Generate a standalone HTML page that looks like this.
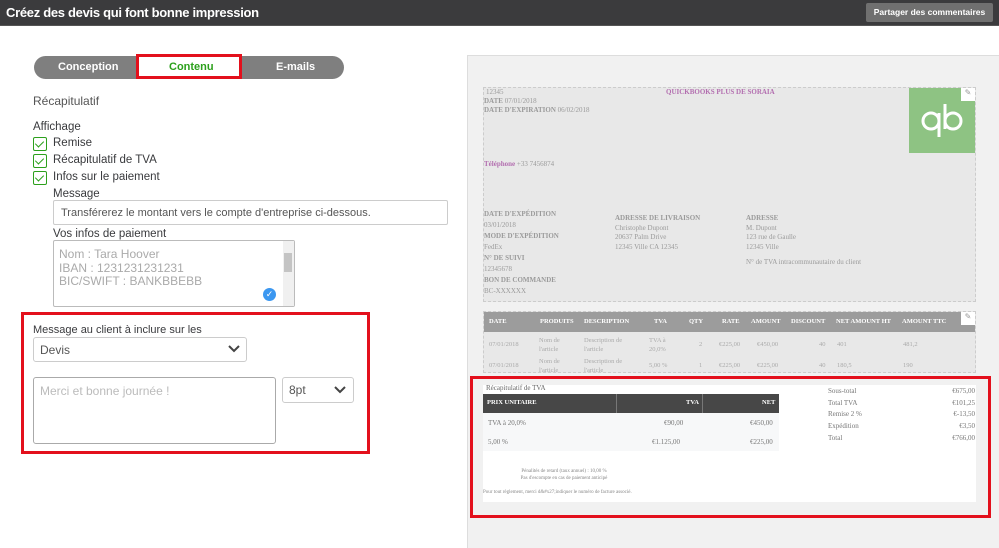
<!DOCTYPE html>
<html><head><meta charset="utf-8"><style>
*{margin:0;padding:0;box-sizing:border-box}
body{width:999px;height:548px;overflow:hidden;background:#fff;font-family:"Liberation Sans",sans-serif;position:relative;color:#393a3d}
.a{position:absolute}
.s{font-family:"Liberation Serif",serif}
.cb{position:absolute;width:14px;height:14px;border:1px solid #2ca01c;border-radius:2px;background:#fff}
.cb:after{content:"";position:absolute;left:3px;top:1px;width:4px;height:7px;border:solid #2ca01c;border-width:0 1.5px 1.5px 0;transform:rotate(45deg)}
.lbl{font-size:11.5px;color:#393a3d}
.g{color:#9a9a9a}
.th{color:#fff;font-weight:bold;font-size:6.5px;white-space:nowrap}
</style></head><body>
<div class="a" style="left:0;top:0;width:999px;height:26px;background:#3b3b3d;border-bottom:1px solid #555"></div>
<div class="a" style="left:6px;top:5px;font-size:13px;font-weight:bold;color:#fff;letter-spacing:-0.3px">Créez des devis qui font bonne impression</div>
<div class="a" style="left:866px;top:3px;width:127px;height:19px;background:#707070;border-radius:2px;color:#fff;font-size:8.5px;font-weight:bold;text-align:center;line-height:19px">Partager des commentaires</div>

<div class="a" style="left:34px;top:56px;width:310px;height:23px;background:#7f7f7f;border-radius:12px"></div>
<div class="a" style="left:58px;top:61px;font-size:11px;font-weight:bold;color:#fff">Conception</div>
<div class="a" style="left:136px;top:54px;width:106px;height:25px;background:#fff;border:3px solid #e3101c"></div>
<div class="a" style="left:169px;top:61px;font-size:11px;font-weight:bold;color:#2ca01c">Contenu</div>
<div class="a" style="left:276px;top:61px;font-size:11px;font-weight:bold;color:#fff">E-mails</div>

<div class="a" style="left:33px;top:94px;font-size:12px;color:#555">Récapitulatif</div>
<div class="a lbl" style="left:33px;top:121px">Affichage</div>
<div class="cb" style="left:33px;top:137px"></div><div class="a lbl" style="left:53px;top:137px">Remise</div>
<div class="cb" style="left:33px;top:154px"></div><div class="a lbl" style="left:53px;top:154px">Récapitulatif de TVA</div>
<div class="cb" style="left:33px;top:171px"></div><div class="a lbl" style="left:53px;top:171px">Infos sur le paiement</div>
<div class="a lbl" style="left:53px;top:188px">Message</div>
<div class="a" style="left:53px;top:200px;width:395px;height:25px;border:1px solid #ccc;border-radius:2px;font-size:11px;color:#555;padding:6px 7px">Transférerez le montant vers le compte d'entreprise ci-dessous.</div>
<div class="a lbl" style="left:53px;top:228px">Vos infos de paiement</div>
<div class="a" style="left:53px;top:240px;width:242px;height:67px;border:1px solid #bbb;border-radius:2px;font-size:12px;color:#aaa;padding:7px 5px;line-height:13.5px;overflow:hidden">Nom : Tara Hoover<br>IBAN : 1231231231231<br>BIC/SWIFT : BANKBBEBB</div>
<div class="a" style="left:283px;top:241px;width:11px;height:65px;background:#f0f0f0"></div>
<div class="a" style="left:284px;top:253px;width:8px;height:19px;background:#c4c4c4"></div>
<div class="a" style="left:263px;top:288px;width:13px;height:13px;border-radius:50%;background:#3b97f0;color:#fff;font-size:9px;text-align:center;line-height:13px">✓</div>

<div class="a" style="left:21px;top:312px;width:349px;height:142px;border:3px solid #e3101c"></div>
<div class="a lbl" style="left:33px;top:324px;font-size:11px">Message au client à inclure sur les</div>
<div class="a" style="left:33px;top:337px;width:214px;height:25px;border:1px solid #ccc;border-radius:3px;font-size:12px;color:#555;padding:5px 6px">Devis</div>
<svg class="a" style="left:228px;top:345px" width="12" height="8"><path d="M1 1l5 5 5-5" stroke="#444" stroke-width="2" fill="none"/></svg>
<div class="a" style="left:33px;top:377px;width:243px;height:67px;border:1px solid #aaa;border-radius:3px;font-size:12px;color:#bbb;padding:6px 6px">Merci et bonne journée !</div>
<div class="a" style="left:282px;top:377px;width:72px;height:26px;border:1px solid #ccc;border-radius:3px;font-size:12px;color:#555;padding:5px 6px">8pt</div>
<svg class="a" style="left:334px;top:386px" width="12" height="8"><path d="M1 1l5 5 5-5" stroke="#444" stroke-width="2" fill="none"/></svg>

<!-- right panel -->
<div class="a" style="left:467px;top:55px;width:532px;height:493px;background:#f1f1f1;border-left:1px solid #ddd;border-top:1px solid #ddd"></div>
<div class="a" style="left:483px;top:87px;width:493px;height:215px;background:#e8e8e8;border:1px dashed #ccc"></div>
<div class="a s g" style="left:486px;top:88px;font-size:7px">12345</div>
<div class="a s" style="left:666px;top:88px;font-size:7px;color:#b36fb0;font-weight:bold">QUICKBOOKS PLUS DE SORAIA</div>
<div class="a s g" style="left:484px;top:97px;font-size:7px"><b>DATE</b> 07/01/2018</div>
<div class="a s g" style="left:484px;top:106px;font-size:7px"><b>DATE D'EXPIRATION</b> 06/02/2018</div>
<div class="a" style="left:909px;top:88px;width:66px;height:65px;background:#8ec383"></div>
<svg class="a" style="left:920px;top:96px" width="46" height="46"><circle cx="11" cy="25" r="8" stroke="#fff" stroke-width="3" fill="none"/><circle cx="33" cy="25" r="8" stroke="#fff" stroke-width="3" fill="none"/><path d="M19 17v24M25 8v25" stroke="#fff" stroke-width="3"/></svg>
<div class="a" style="left:961px;top:88px;width:14px;height:13px;background:#fff;font-size:8px;color:#999;text-align:center">✎</div>
<div class="a s" style="left:484px;top:160px;font-size:7px;color:#b36fb0;font-weight:bold">Téléphone <span class="g" style="font-weight:normal">+33 7456874</span></div>
<div class="a s g" style="left:484px;top:209px;font-size:7px;line-height:11px"><b>DATE D'EXPÉDITION</b><br>03/01/2018<br><b>MODE D'EXPÉDITION</b><br>FedEx<br><b>N° DE SUIVI</b><br>12345678<br><b>BON DE COMMANDE</b><br>BC-XXXXXX</div>
<div class="a s g" style="left:615px;top:214px;font-size:7px;line-height:9.5px"><b>ADRESSE DE LIVRAISON</b><br>Christophe Dupont<br>20637 Palm Drive<br>12345 Ville CA 12345</div>
<div class="a s g" style="left:746px;top:214px;font-size:7px;line-height:9.5px"><b>ADRESSE</b><br>M. Dupont<br>123 rue de Gaulle<br>12345 Ville<br><span style="line-height:20px">N° de TVA intracommunautaire du client</span></div>

<div class="a" style="left:483px;top:311px;width:493px;height:62px;background:#e8e8e8;border:1px dashed #ccc"></div>
<div class="a" style="left:484px;top:312px;width:491px;height:20px;background:#9c9c9c"></div>
<div class="a s th" style="left:489px;top:318px">DATE</div>
<div class="a s th" style="left:540px;top:318px">PRODUITS</div>
<div class="a s th" style="left:584px;top:318px">DESCRIPTION</div>
<div class="a s th" style="left:654px;top:318px">TVA</div>
<div class="a s th" style="left:689px;top:318px">QTY</div>
<div class="a s th" style="left:722px;top:318px">RATE</div>
<div class="a s th" style="left:751px;top:318px">AMOUNT</div>
<div class="a s th" style="left:791px;top:318px">DISCOUNT</div>
<div class="a s th" style="left:836px;top:318px">NET AMOUNT HT</div>
<div class="a s th" style="left:902px;top:318px">AMOUNT TTC</div>
<div class="a" style="left:961px;top:312px;width:14px;height:13px;background:#fff;font-size:8px;color:#999;text-align:center">✎</div>
<div class="a s g" style="left:489px;top:336px;font-size:6.5px;line-height:9px;width:480px;color:#aaa">
<span class="a" style="left:0;top:4px">07/01/2018</span><span class="a" style="left:50px;top:0">Nom de<br>l'article</span><span class="a" style="left:95px;top:0">Description de<br>l'article</span><span class="a" style="left:160px;top:0">TVA à<br>20,0%</span><span class="a" style="left:210px;top:4px">2</span><span class="a" style="left:230px;top:4px">€225,00</span><span class="a" style="left:268px;top:4px">€450,00</span><span class="a" style="left:330px;top:4px">40</span><span class="a" style="left:348px;top:4px">401</span><span class="a" style="left:414px;top:4px">481,2</span>
<span class="a" style="left:0;top:25px">07/01/2018</span><span class="a" style="left:50px;top:21px">Nom de<br>l'article</span><span class="a" style="left:95px;top:21px">Description de<br>l'article</span><span class="a" style="left:160px;top:25px">5,00 %</span><span class="a" style="left:210px;top:25px">1</span><span class="a" style="left:230px;top:25px">€225,00</span><span class="a" style="left:268px;top:25px">€225,00</span><span class="a" style="left:330px;top:25px">40</span><span class="a" style="left:348px;top:25px">180,5</span><span class="a" style="left:414px;top:25px">190</span></div>

<div class="a" style="left:470px;top:376px;width:521px;height:142px;border:3px solid #e3101c"></div>
<div class="a" style="left:483px;top:385px;width:493px;height:117px;background:#fff"></div>
<div class="a s" style="left:486px;top:384px;font-size:7px;color:#666">Récapitulatif de TVA</div>
<div class="a" style="left:483px;top:394px;width:296px;height:19px;background:#474747"></div>
<div class="a s th" style="left:487px;top:399px">PRIX UNITAIRE</div>
<div class="a" style="left:616px;top:394px;width:1px;height:19px;background:#777"></div>
<div class="a" style="left:702px;top:394px;width:1px;height:19px;background:#777"></div>
<div class="a s th" style="left:686px;top:399px">TVA</div>
<div class="a s th" style="left:762px;top:399px">NET</div>
<div class="a" style="left:483px;top:413px;width:296px;height:38px;background:#f7f8f9"></div>
<div class="a s" style="left:488px;top:419px;font-size:7px;color:#777;width:286px"><span class="a" style="left:0">TVA à 20,0%</span><span class="a" style="left:176px">€90,00</span><span class="a" style="left:262px">€450,00</span><span class="a" style="left:0;top:19px">5,00 %</span><span class="a" style="left:164px;top:19px">€1.125,00</span><span class="a" style="left:262px;top:19px">€225,00</span></div>
<div class="a s" style="left:828px;top:386px;font-size:7px;color:#777;line-height:11.7px">Sous-total<br>Total TVA<br>Remise 2 %<br>Expédition<br>Total</div>
<div class="a s" style="left:930px;top:386px;width:45px;text-align:right;font-size:7px;color:#777;line-height:11.7px">€675,00<br>€101,25<br>€-13,50<br>€3,50<br>€766,00</div>
<div class="a s" style="left:483px;top:468px;width:162px;text-align:center;font-size:5px;color:#888;line-height:7px">Pénalités de retard (taux annuel) : 10,00 %<br>Pas d'escompte en cas de paiement anticipé</div>
<div class="a s" style="left:483px;top:490px;font-size:5px;color:#888">Pour tout règlement, merci d&amp;#x27;indiquer le numéro de facture associé.</div>
</body></html>
